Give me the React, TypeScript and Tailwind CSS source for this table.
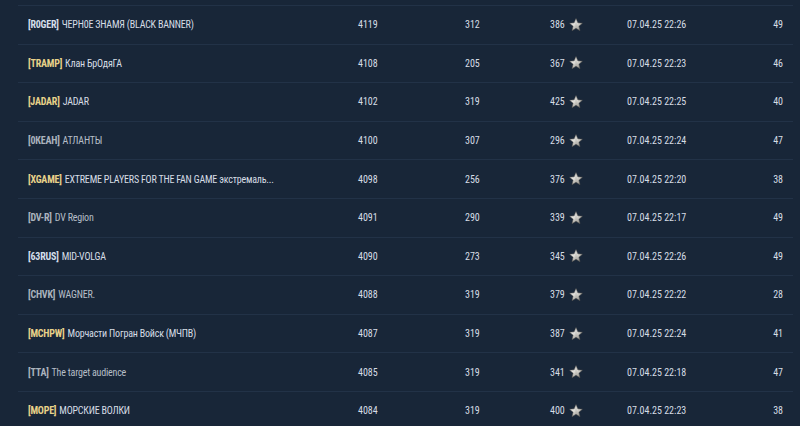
type Tone = "white" | "gold" | "gray";

type Clan = {
    tag: string;
    name: string;
    tone: Tone;
    rating: number;
    members: number;
    stars: number;
    updated: string;
    battles: number;
};

const clans: Clan[] = [
    { tag: "R0GER", name: "ЧЕРН0Е ЗНАМЯ (BLACK BANNER)", tone: "white", rating: 4119, members: 312, stars: 386, updated: "07.04.25 22:26", battles: 49 },
    { tag: "TRAMP", name: "Клан БрОдяГА", tone: "gold", rating: 4108, members: 205, stars: 367, updated: "07.04.25 22:23", battles: 46 },
    { tag: "JADAR", name: "JADAR", tone: "gold", rating: 4102, members: 319, stars: 425, updated: "07.04.25 22:25", battles: 40 },
    { tag: "0КЕАН", name: "АТЛАНТЫ", tone: "gray", rating: 4100, members: 307, stars: 296, updated: "07.04.25 22:24", battles: 47 },
    { tag: "XGAME", name: "EXTREME PLAYERS FOR THE FAN GAME экстремаль...", tone: "gold", rating: 4098, members: 256, stars: 376, updated: "07.04.25 22:20", battles: 38 },
    { tag: "DV-R", name: "DV Region", tone: "gray", rating: 4091, members: 290, stars: 339, updated: "07.04.25 22:17", battles: 49 },
    { tag: "63RUS", name: "MID-VOLGA", tone: "white", rating: 4090, members: 273, stars: 345, updated: "07.04.25 22:26", battles: 49 },
    { tag: "CHVK", name: "WAGNER.", tone: "gray", rating: 4088, members: 319, stars: 379, updated: "07.04.25 22:22", battles: 28 },
    { tag: "MCHPW", name: "Морчасти Погран Войск (МЧПВ)", tone: "gold", rating: 4087, members: 319, stars: 387, updated: "07.04.25 22:24", battles: 41 },
    { tag: "TTA", name: "The target audience", tone: "gray", rating: 4085, members: 319, stars: 341, updated: "07.04.25 22:18", battles: 47 },
    { tag: "MOPE", name: "МОРСКИЕ ВОЛКИ", tone: "gold", rating: 4084, members: 319, stars: 400, updated: "07.04.25 22:23", battles: 38 },
];

function Star() {
    return (
        <svg width="14" height="14" viewBox="0 0 24 24" className="shrink-0">
            <defs>
                <linearGradient id="silver" x1="0.2" y1="0" x2="0.8" y2="1">
                    <stop offset="0" stopColor="#ffffff" />
                    <stop offset="0.5" stopColor="#d8d6d0" />
                    <stop offset="1" stopColor="#8c8a84" />
                </linearGradient>
            </defs>
            <path
                d="M12 1l3.2 7.3 7.8.6-6 5.2 1.9 7.7L12 17.7l-6.9 4.1 1.9-7.7-6-5.2 7.8-.6z"
                fill="url(#silver)"
                stroke="#4e4c48"
                strokeWidth="0.9"
                strokeLinejoin="round"
            />
            <path d="M12 3.5v13.2" stroke="#9a9892" strokeWidth="0.6" />
        </svg>
    );
}

function ClanRow({ clan }: { clan: Clan }) {
    const tagColor =
        clan.tone === "gold" ? "text-[#e8d28a]" : clan.tone === "white" ? "text-[#d4deea]" : "text-[#aab3bd]";
    const nameColor = clan.tone === "gray" ? "text-[#b6bec7]" : "text-[#d6dde5]";

    return (
        <div className="grid h-[38.6px] grid-cols-[330px_107px_85px_77px_1fr_40px] items-center border-t border-[#223247] pl-[10px] pr-[10px]">
            <div className="flex items-center gap-[3px] truncate tracking-[-0.2px]">
                <span className={`font-bold ${tagColor}`}>[{clan.tag}]</span>
                <span className={nameColor}>{clan.name}</span>
            </div>
            <div>{clan.rating}</div>
            <div>{clan.members}</div>
            <div className="flex items-center gap-[4px]">
                <span>{clan.stars}</span>
                <Star />
            </div>
            <div>{clan.updated}</div>
            <div className="text-right">{clan.battles}</div>
        </div>
    );
}

export default function App() {
    return (
        <div
            className="h-[426px] w-[800px] overflow-hidden bg-[#182638] text-[10px] font-stretch-condensed text-[#d6dde5]"
            style={{ fontFamily: '"Roboto Condensed", Roboto, sans-serif' }}
        >
            <div className="pt-[5px] pl-[18px] pr-[7px]">
                {clans.map((clan) => (
                    <ClanRow key={clan.tag} clan={clan} />
                ))}
            </div>
        </div>
    );
}
